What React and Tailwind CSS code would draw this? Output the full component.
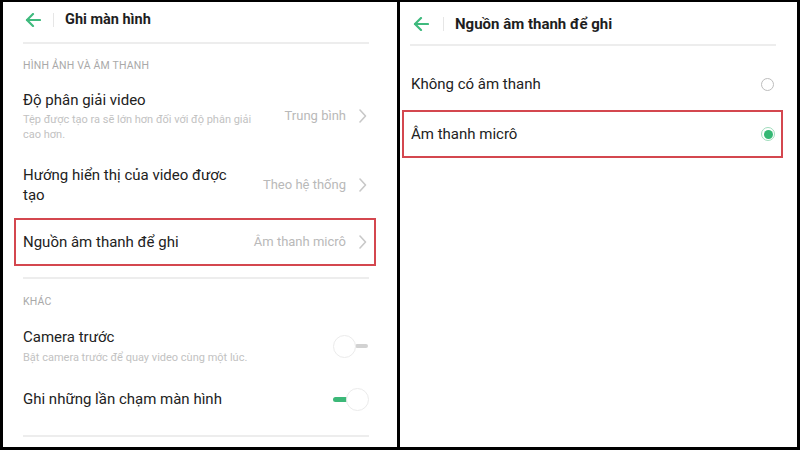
import React from "react";

const font = { fontFamily: "Roboto, 'Noto Sans', sans-serif" };

function BackArrow() {
  return (
    <svg width="16" height="14" viewBox="0 0 16 14" fill="none" stroke="#3fba7e" strokeWidth="2.2" strokeLinecap="round" strokeLinejoin="round">
      <line x1="2" y1="7" x2="15" y2="7" />
      <polyline points="8,1 2,7 8,13" />
    </svg>
  );
}

function Chevron() {
  return (
    <svg width="9" height="14" viewBox="0 0 9 14" fill="none" stroke="#c8c8c8" strokeWidth="1.6" strokeLinecap="round" strokeLinejoin="round">
      <polyline points="2,1 7.5,7 2,13" />
    </svg>
  );
}

function ToggleOff() {
  return (
    <div className="relative w-[36px] h-[24px] flex items-center">
      <div className="absolute left-[22px] w-[13px] h-[4px] rounded-full bg-[#d2d2d2]" />
      <div className="absolute left-0 w-[23px] h-[23px] rounded-full bg-white border border-[#ebebeb]" />
    </div>
  );
}

function ToggleOn() {
  return (
    <div className="relative w-[36px] h-[24px] flex items-center">
      <div className="absolute left-0 w-[15px] h-[5px] rounded-full bg-[#3cb878]" />
      <div className="absolute left-[13px] w-[23px] h-[23px] rounded-full bg-white border border-[#ebebeb]" />
    </div>
  );
}

export default function App() {
  return (
    <div className="w-[800px] h-[450px] bg-black flex pt-[2px] pb-[3px] pl-[3px] pr-[3px] gap-[3px] overflow-hidden" style={font}>
      {/* Left panel */}
      <div className="w-[394px] h-[445px] bg-white flex flex-col pl-[20px] pr-[28px]">
        <div className="h-[34px] pt-[1px] flex items-center">
          <div className="ml-[2px] flex items-center"><BackArrow /></div>
          <div className="ml-[12px] w-px h-[14px] bg-[#e6e6e6]" />
          <div className="ml-[11px] text-[14.5px] font-bold text-[#1e1e1e] leading-[20px]">Ghi màn hình</div>
        </div>
        <div className="mt-[6px] h-[2px] bg-[#ededed]" />
        <div className="mt-[15px] text-[10.5px] leading-[14px] text-[#a9a9a9] tracking-[0.2px]">HÌNH ẢNH VÀ ÂM THANH</div>

        <div className="mt-[17px] flex items-center">
          <div className="flex-1">
            <div className="text-[15px] leading-[20px] text-[#222]">Độ phân giải video</div>
            <div className="mt-[2px] text-[11px] leading-[15px] text-[#c2c2c2] w-[240px]">Tệp được tạo ra sẽ lớn hơn đối với độ phân giải cao hơn.</div>
          </div>
          <div className="text-[13px] text-[#b9b9b9] mr-[12px]">Trung bình</div>
          <div className="mr-[2px] flex"><Chevron /></div>
        </div>

        <div className="mt-[23px] flex items-center">
          <div className="flex-1">
            <div className="text-[15px] leading-[20px] text-[#222] w-[220px]">Hướng hiển thị của video được tạo</div>
          </div>
          <div className="text-[13px] text-[#b9b9b9] mr-[12px]">Theo hệ thống</div>
          <div className="mr-[2px] flex"><Chevron /></div>
        </div>

        <div className="mt-[13px] -ml-[9px] -mr-[7px] h-[48px] border-2 border-[#d4474f] flex items-center pl-[7px]">
          <div className="flex-1 text-[15px] leading-[20px] text-[#222]">Nguồn âm thanh để ghi</div>
          <div className="text-[13px] text-[#b9b9b9] mr-[12px]">Âm thanh micrô</div>
          <div className="mr-[7px] flex"><Chevron /></div>
        </div>

        <div className="mt-[11px] h-[2px] bg-[#ededed]" />
        <div className="mt-[16px] text-[10.5px] leading-[14px] text-[#a9a9a9] tracking-[0.2px]">KHÁC</div>

        <div className="mt-[18px] flex items-center">
          <div className="flex-1">
            <div className="text-[15px] leading-[20px] text-[#222]">Camera trước</div>
            <div className="mt-[3px] text-[11px] leading-[15px] text-[#c2c2c2]">Bật camera trước để quay video cùng một lúc.</div>
          </div>
          <ToggleOff />
        </div>

        <div className="mt-[22px] flex items-center">
          <div className="flex-1 text-[15px] leading-[20px] text-[#222]">Ghi những lần chạm màn hình</div>
          <ToggleOn />
        </div>

        <div className="mt-[24px] h-[2px] bg-[#ededed]" />
      </div>

      {/* Right panel */}
      <div className="flex-1 h-[445px] bg-white flex flex-col px-[10px]">
        <div className="h-[42px] pt-[1px] flex items-center">
          <div className="ml-[3px] flex items-center"><BackArrow /></div>
          <div className="ml-[14px] w-px h-[14px] bg-[#e6e6e6]" />
          <div className="ml-[11px] text-[15px] font-bold text-[#1e1e1e] leading-[20px]">Nguồn âm thanh để ghi</div>
        </div>
        <div className="h-[2px] bg-[#ededed] mr-[11px]" />

        <div className="mt-[28px] flex items-center h-[20px]">
          <div className="flex-1 ml-[1px] text-[15px] leading-[20px] text-[#222]">Không có âm thanh</div>
          <div className="mr-[13px] w-[13px] h-[13px] rounded-full border border-[#bdbdbd]" />
        </div>

        <div className="mt-[16px] -ml-[8px] mr-[4px] h-[48px] border-2 border-[#d4474f] flex items-center pl-[7px]">
          <div className="flex-1 text-[15px] leading-[20px] text-[#222]">Âm thanh micrô</div>
          <div className="mr-[6px] w-[14px] h-[14px] rounded-full border border-[#9fdcbc] flex items-center justify-center">
            <div className="w-[9px] h-[9px] rounded-full bg-[#35b874]" />
          </div>
        </div>
      </div>
    </div>
  );
}
